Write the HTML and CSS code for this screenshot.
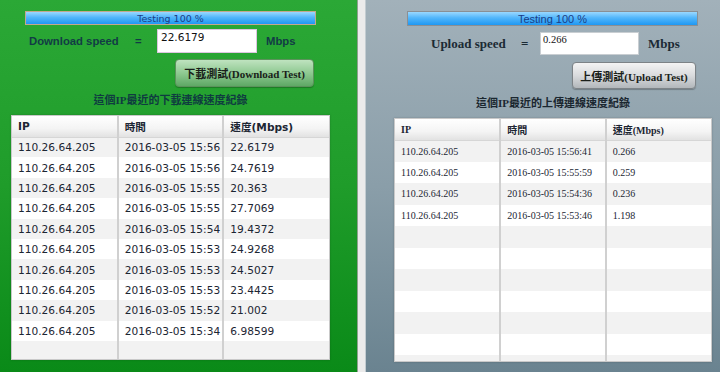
FILE: index.html
```html
<!DOCTYPE html>
<html lang="zh-Hant">
<head>
    <meta charset="UTF-8">
    <meta name="viewport" content="width=device-width, initial-scale=1.0">
    <title>Speed Test</title>
    <link rel="stylesheet" href="styles.css">
</head>
<body>
    <div class="page">
        <section class="panel panel-down">
            <div class="progress"><span>Testing 100 %</span></div>
            <div class="speed-row">
                <span class="speed-label">Download speed</span>
                <span class="speed-eq">=</span>
                <input class="speed-value" type="text" value="22.6179" readonly>
                <span class="speed-unit">Mbps</span>
            </div>
            <button class="test-btn">下載測試(Download Test)</button>
            <h3 class="caption">這個IP最近的下載連線速度紀錄</h3>
            <div class="log">
                <table>
                    <thead>
                        <tr><th>IP</th><th>時間</th><th>速度(Mbps)</th></tr>
                    </thead>
                    <tbody>
                        <tr><td>110.26.64.205</td><td>2016-03-05 15:56</td><td>22.6179</td></tr>
                        <tr><td>110.26.64.205</td><td>2016-03-05 15:56</td><td>24.7619</td></tr>
                        <tr><td>110.26.64.205</td><td>2016-03-05 15:55</td><td>20.363</td></tr>
                        <tr><td>110.26.64.205</td><td>2016-03-05 15:55</td><td>27.7069</td></tr>
                        <tr><td>110.26.64.205</td><td>2016-03-05 15:54</td><td>19.4372</td></tr>
                        <tr><td>110.26.64.205</td><td>2016-03-05 15:53</td><td>24.9268</td></tr>
                        <tr><td>110.26.64.205</td><td>2016-03-05 15:53</td><td>24.5027</td></tr>
                        <tr><td>110.26.64.205</td><td>2016-03-05 15:53</td><td>23.4425</td></tr>
                        <tr><td>110.26.64.205</td><td>2016-03-05 15:52</td><td>21.002</td></tr>
                        <tr><td>110.26.64.205</td><td>2016-03-05 15:34</td><td>6.98599</td></tr>
                        <tr><td></td><td></td><td></td></tr>
                    </tbody>
                </table>
            </div>
        </section>

        <div class="divider"></div>

        <section class="panel panel-up">
            <div class="progress"><span>Testing 100 %</span></div>
            <div class="speed-row">
                <span class="speed-label">Upload speed</span>
                <span class="speed-eq">=</span>
                <input class="speed-value" type="text" value="0.266" readonly>
                <span class="speed-unit">Mbps</span>
            </div>
            <button class="test-btn">上傳測試(Upload Test)</button>
            <h3 class="caption">這個IP最近的上傳連線速度紀錄</h3>
            <div class="log">
                <table>
                    <thead>
                        <tr><th>IP</th><th>時間</th><th>速度(Mbps)</th></tr>
                    </thead>
                    <tbody>
                        <tr><td>110.26.64.205</td><td>2016-03-05 15:56:41</td><td>0.266</td></tr>
                        <tr><td>110.26.64.205</td><td>2016-03-05 15:55:59</td><td>0.259</td></tr>
                        <tr><td>110.26.64.205</td><td>2016-03-05 15:54:36</td><td>0.236</td></tr>
                        <tr><td>110.26.64.205</td><td>2016-03-05 15:53:46</td><td>1.198</td></tr>
                        <tr><td></td><td></td><td></td></tr>
                        <tr><td></td><td></td><td></td></tr>
                        <tr><td></td><td></td><td></td></tr>
                        <tr><td></td><td></td><td></td></tr>
                        <tr><td></td><td></td><td></td></tr>
                        <tr><td></td><td></td><td></td></tr>
                        <tr><td></td><td></td><td></td></tr>
                    </tbody>
                </table>
            </div>
        </section>
    </div>
</body>
</html>
```

FILE: styles.css
```css
* {
    margin: 0;
    padding: 0;
    box-sizing: border-box;
}

body {
    width: 720px;
    height: 372px;
    overflow: hidden;
    font-family: "DejaVu Sans", Verdana, "Noto Sans CJK TC", sans-serif;
}

.page {
    display: flex;
    height: 372px;
}

.panel {
    display: flex;
    flex-direction: column;
    align-items: flex-start;
    height: 372px;
}

.panel-down {
    width: 357px;
    background: linear-gradient(180deg, #2ba836 0%, #1f9c2a 50%, #0a8a18 100%);
}

.panel-up {
    width: 354px;
    background: linear-gradient(180deg, #a2b1ba 0%, #8a9ea9 50%, #6a8390 100%);
    font-family: "Liberation Serif", "Noto Sans CJK TC", serif;
}

.divider {
    width: 9px;
    background: #ebebeb;
    border-left: 1px solid #8fa08f;
    border-right: 1px solid #c3ccd1;
}

/* progress bar */
.progress {
    display: flex;
    align-items: center;
    justify-content: center;
    background: linear-gradient(180deg, #9ad8ff 0%, #52b6fb 45%, #1f98f2 100%);
    color: #1b3d86;
}

.panel-down .progress {
    margin: 11px 0 0 25px;
    width: 291px;
    height: 14px;
    border: 1px solid #c4a88e;
    font-size: 9.5px;
}

.panel-up .progress {
    margin: 11px 0 0 41px;
    width: 291px;
    height: 15px;
    border: 1px solid #8a8f94;
    font-family: "Liberation Sans", Arial, sans-serif;
    font-size: 11px;
}

/* speed value row */
.speed-row {
    display: flex;
    align-items: center;
    font-weight: bold;
}

.speed-eq {
    text-align: left;
}

.speed-value {
    background: #fff;
    outline: none;
    color: #111;
    padding: 0 3px 8px;
}

.panel-down .speed-row {
    margin-top: 4px;
    height: 24px;
    color: #123c45;
    font-family: "Liberation Sans", Arial, sans-serif;
    font-size: 11.3px;
}

.panel-down .speed-label {
    margin-left: 29px;
    width: 106px;
}

.panel-down .speed-eq {
    width: 22px;
}

.panel-down .speed-value {
    width: 100px;
    height: 24px;
    border: 1px solid #dcc6e0;
    font-family: "DejaVu Sans", Verdana, sans-serif;
    font-size: 10.5px;
}

.panel-down .speed-unit {
    margin-left: 9px;
}

.panel-up .speed-row {
    margin-top: 6px;
    height: 23px;
    color: #1b2a34;
    font-size: 13px;
}

.panel-up .speed-label {
    margin-left: 65px;
    width: 90px;
}

.panel-up .speed-eq {
    width: 19px;
}

.panel-up .speed-value {
    width: 99px;
    height: 23px;
    border: 1px solid #c9ced2;
    font-family: "Liberation Serif", serif;
    font-size: 10.5px;
    padding-left: 2px;
}

.panel-up .speed-unit {
    margin-left: 9px;
}

/* test button */
.test-btn {
    border-radius: 4px;
    font-family: "Liberation Serif", "Noto Sans CJK TC", serif;
    font-weight: bold;
    font-size: 11px;
    color: #1a1f1a;
    cursor: pointer;
}

.panel-down .test-btn {
    margin: 6px 0 0 175px;
    width: 139px;
    height: 28px;
    border: 1px solid #5c925c;
    background: linear-gradient(180deg, #bfe3bf 0%, #8fc992 50%, #5fa865 100%);
    box-shadow: 0 1px 1px rgba(0, 0, 0, 0.25);
}

.panel-up .test-btn {
    margin: 7px 0 0 206px;
    width: 124px;
    height: 27px;
    border: 1px solid #7d8387;
    background: linear-gradient(180deg, #f4f4f4 0%, #d9dbdd 50%, #b2b7bb 100%);
    box-shadow: 0 1px 1px rgba(0, 0, 0, 0.25);
}

/* caption above the table */
.caption {
    text-align: center;
    font-size: 11px;
    line-height: 14px;
    font-weight: bold;
    font-family: "Liberation Serif", "Noto Sans CJK TC", serif;
}

.panel-down .caption {
    margin: 6px 0 8px 11px;
    width: 319px;
    color: #0f3c40;
}

.panel-up .caption {
    margin: 7px 0 8px 28px;
    width: 318px;
    color: #1b2730;
}

/* log table */
.log {
    background: #fff;
    border: 1px solid #c9c9c9;
    box-shadow: 0 0 2px rgba(0, 0, 0, 0.2);
    overflow: hidden;
}

.panel-down .log {
    margin-left: 11px;
    width: 319px;
    height: 245px;
}

.panel-up .log {
    margin-left: 28px;
    width: 318px;
    height: 244px;
}

.log table {
    width: 100%;
    border-collapse: collapse;
    table-layout: fixed;
    color: #1c2633;
}

.log th,
.log td {
    text-align: left;
    padding: 0 0 0 6px;
    white-space: nowrap;
    overflow: hidden;
    border-left: 2px solid #d0d0d0;
}

.log th:first-child,
.log td:first-child {
    border-left: none;
}

.log th {
    background: linear-gradient(180deg, #ffffff 0%, #f4f4f4 60%, #e2e2e2 100%);
    border-bottom: 1px solid #d6d6d6;
    font-weight: bold;
    height: 21px;
}

.log tbody tr:nth-child(odd) td {
    background: #f2f2f2;
}

.log tbody tr:nth-child(even) td {
    background: #fff;
}

.panel-down .log table {
    font-size: 10.6px;
}

.panel-down .log td {
    height: 20.4px;
}

.panel-up .log table {
    font-size: 10px;
}

.panel-up .log td {
    height: 21.5px;
}
```
